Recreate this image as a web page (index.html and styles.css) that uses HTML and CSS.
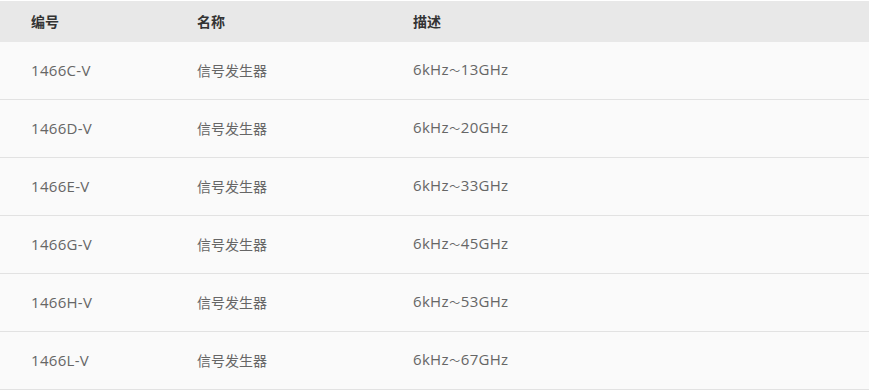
FILE: index.html
```html
<!DOCTYPE html>
<html lang="zh">
<head>
<meta charset="utf-8">
<link rel="stylesheet" href="styles.css">
</head>
<body>
<div class="table">
  <div class="row head">
    <div class="cell c1">编号</div>
    <div class="cell c2">名称</div>
    <div class="cell c3">描述</div>
  </div>
  <div class="row">
    <div class="cell c1 latin">1466C-V</div>
    <div class="cell c2">信号发生器</div>
    <div class="cell c3 latin">6kHz<span class="tilde">～</span>13GHz</div>
  </div>
  <div class="row">
    <div class="cell c1 latin">1466D-V</div>
    <div class="cell c2">信号发生器</div>
    <div class="cell c3 latin">6kHz<span class="tilde">～</span>20GHz</div>
  </div>
  <div class="row">
    <div class="cell c1 latin">1466E-V</div>
    <div class="cell c2">信号发生器</div>
    <div class="cell c3 latin">6kHz<span class="tilde">～</span>33GHz</div>
  </div>
  <div class="row">
    <div class="cell c1 latin">1466G-V</div>
    <div class="cell c2">信号发生器</div>
    <div class="cell c3 latin">6kHz<span class="tilde">～</span>45GHz</div>
  </div>
  <div class="row">
    <div class="cell c1 latin">1466H-V</div>
    <div class="cell c2">信号发生器</div>
    <div class="cell c3 latin">6kHz<span class="tilde">～</span>53GHz</div>
  </div>
  <div class="row">
    <div class="cell c1 latin">1466L-V</div>
    <div class="cell c2">信号发生器</div>
    <div class="cell c3 latin">6kHz<span class="tilde">～</span>67GHz</div>
  </div>
</div>
</body>
</html>
```
FILE: styles.css
```css
html, body {
  margin: 0;
  padding: 0;
  background: #ffffff;
}
body {
  padding-top: 1px;
  font-family: "Open Sans", "Noto Sans CJK SC", sans-serif;
  font-size: 14px;
  color: #666666;
}
.table {
  width: 869px;
}
.row {
  display: grid;
  grid-template-columns: 197px 216px 1fr;
  height: 57px;
  align-items: center;
  background: #fafafa;
  border-bottom: 1px solid #e2e2e2;
}
.row.head {
  height: 41px;
  background: #e8e8e8;
  border-bottom: none;
  font-weight: bold;
  font-size: 14px;
  color: #333333;
}
.cell {
  white-space: nowrap;
  padding-bottom: 2px;
}
.latin {
  font-size: 15px;
  letter-spacing: 0.3px;
  line-height: 20px;
}
.tilde {
  font-size: 11px;
  letter-spacing: 0;
  margin: 0 0.5px;
}
.c1 {
  padding-left: 31px;
}
```
